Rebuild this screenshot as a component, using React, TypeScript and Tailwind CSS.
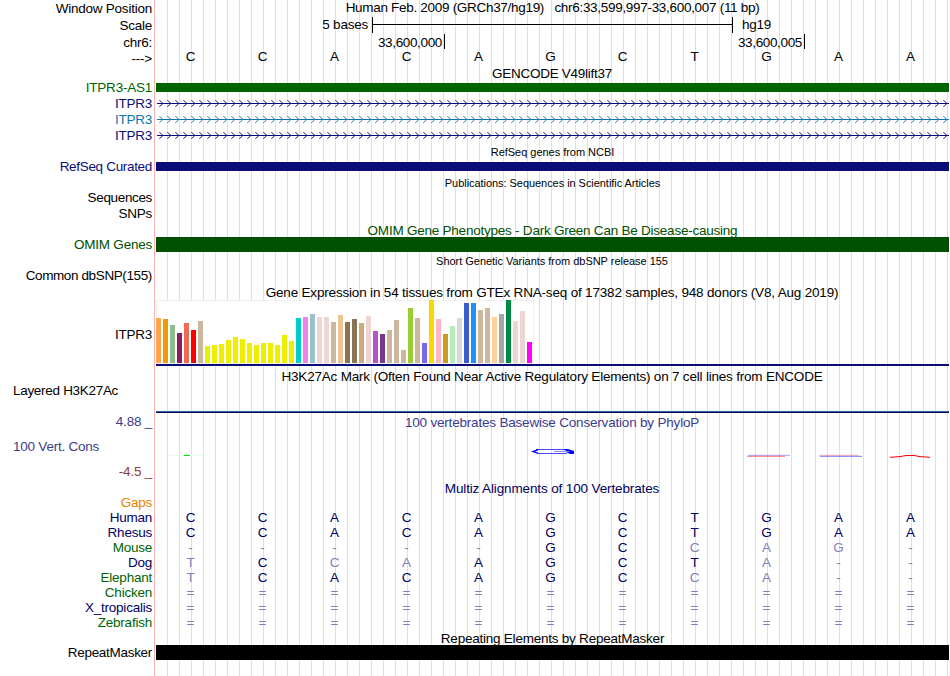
import type { ReactNode } from "react";
import clsx from "clsx";

type RowProps = {
  h: string;
  label?: ReactNode;
  labelCls?: string;
  children?: ReactNode;
};

const NAVY = "text-[#0c0c78]";
const DEEP = "text-[#000064]";
const GREEN = "text-[#006400]";

const sequence = "CCACAGCTGAA";

// lower case = base differs from the reference genome
const species = [
  { name: "Human", cls: DEEP, bases: "CCACAGCTGAA" },
  { name: "Rhesus", cls: DEEP, bases: "CCACAGCTGAA" },
  { name: "Mouse", cls: GREEN, bases: "-----GCcag-" },
  { name: "Dog", cls: DEEP, bases: "tCcaAGCTa--" },
  { name: "Elephant", cls: GREEN, bases: "tCACAGCca--" },
  { name: "Chicken", cls: GREEN, bases: "===========" },
  { name: "X_tropicalis", cls: DEEP, bases: "===========" },
  { name: "Zebrafish", cls: GREEN, bases: "===========" },
];

const tissues: [number, string][] = [
  [45, "#ffa54f"], [44, "#ee9a00"], [38, "#8fbc8f"], [30, "#8b1c62"], [40, "#ee6a50"], [33, "#ff0000"],
  [42, "#cdb79e"], [17, "#eeee00"], [18, "#eeee00"], [19, "#eeee00"], [23, "#eeee00"], [26, "#eeee00"],
  [24, "#eeee00"], [20, "#eeee00"], [18, "#eeee00"], [20, "#eeee00"], [20, "#eeee00"], [18, "#eeee00"],
  [28, "#eeee00"], [22, "#eeee00"], [45, "#00cdcd"], [46, "#ee82ee"], [49, "#9ac0cd"], [46, "#eed5d2"],
  [46, "#eed5d2"], [41, "#cdb79e"], [48, "#eec591"], [41, "#8b7355"], [44, "#8b7355"], [40, "#cdaa7d"],
  [47, "#eed5d2"], [32, "#b452cd"], [29, "#7a378b"], [33, "#cdb79e"], [43, "#cdb79e"], [13, "#cdb79e"],
  [55, "#9acd32"], [45, "#cdb79e"], [20, "#7a67ee"], [63, "#ffd700"], [44, "#ffb6c1"], [29, "#cd9b1d"],
  [37, "#b4eeb4"], [45, "#d9d9d9"], [60, "#3a5fcd"], [60, "#1e90ff"], [53, "#cdb79e"], [55, "#cdb79e"],
  [46, "#ffd39b"], [49, "#a6a6a6"], [63, "#008b45"], [42, "#eed5d2"], [52, "#eed5d2"], [21, "#ff00ff"],
];

function Row({ h, label, labelCls, children }: RowProps) {
  return (
    <div className={clsx("flex shrink-0", h)}>
      <div className={clsx("w-[152px] shrink-0 text-right", labelCls)}>{label}</div>
      <div className="ml-1 w-[793px] shrink-0">{children}</div>
    </div>
  );
}

function Title({ h, cls, children }: { h: string; cls?: string; children: ReactNode }) {
  return (
    <Row h={h}>
      <div className={clsx("text-center", cls)}>{children}</div>
    </Row>
  );
}

function Bases({ bases, cls }: { bases: string; cls: string }) {
  return (
    <div className="-ml-[1.5px] grid w-[793px] grid-cols-[repeat(11,72px)] tracking-normal">
      {bases.split("").map((b, i) => (
        <span key={i} className={clsx("text-center", /[A-Z]/.test(b) ? cls : "text-[#8080b4]")}>
          {b.toUpperCase()}
        </span>
      ))}
    </div>
  );
}

function Intron({ cls }: { cls: string }) {
  return (
    <svg className={clsx("block h-4 w-[793px]", cls)} viewBox="0 0 793 16" fill="none" stroke="currentColor">
      <path d="M1 7.5H793" />
      {Array.from({ length: 99 }, (_, i) => (
        <path key={i} d={`M${i * 8 + 3.5} 4.2l3.3 3.3l-3.3 3.3`} />
      ))}
    </svg>
  );
}

function Conservation() {
  return (
    <svg className="block h-[25px] w-[793px]" viewBox="0 0 793 25" fill="none">
      <path d="M12 16.5H49" stroke="#e4fbe4" />
      <path d="M28 16.5H34" stroke="#00e600" />
      <path d="M380 10.5H409" stroke="#4646ff" />
      <path d="M382 14.5H411" stroke="#4646ff" />
      <path d="M398 12.5H412" stroke="#8c8cff" />
      <path d="M375 12.5l7-2.5v1.5l-3 1l3 1v1.5zM408 10h4l6 2v3h-4l-4-2h4l-6-2z" fill="#0000ff" />
      <path d="M592 16.3H634" stroke="#6464ff" strokeWidth={0.6} />
      <path d="M591 17.3H629" stroke="#ff5050" strokeWidth={0.8} />
      <path d="M663 16.3H702" stroke="#ff7878" strokeWidth={0.6} />
      <path d="M664 17.3H706" stroke="#5050ff" strokeWidth={0.8} />
      <path d="M734 18.3L744 17.6L750 16.5H758L764 17.6L774 18.3" stroke="#ff0000" />
    </svg>
  );
}

export default function App() {
  return (
    <div className="flex h-[676px] w-[950px] overflow-hidden bg-white font-['Liberation_Sans',Arial,sans-serif] text-[13.5px] leading-[15px] tracking-[-0.23px] whitespace-pre text-black">
      <div className="flex w-[949px] flex-col bg-[linear-gradient(#ffb4b4,#ffb4b4),repeating-linear-gradient(90deg,transparent_0_11px,#dcdcff_11px_12px)] bg-[position:154px_0,156px_0] bg-[size:1px_100%,793px_100%] bg-no-repeat">
        <Row h="h-[17px]" label="Window Position" labelCls="pt-px">
          <div className="text-center tracking-[-0.3px]">{"Human Feb. 2009 (GRCh37/hg19)   chr6:33,599,997-33,600,007 (11 bp)"}</div>
        </Row>
        <Row h="h-[18px]" label="Scale" labelCls="pt-px">
          <div className="flex">
            <span className="w-[212px] text-right">5 bases</span>
            <div className="ml-1 flex h-4 w-[361px] items-start border-x border-black pt-[7px]">
              <div className="h-px w-full bg-black" />
            </div>
            <span className="ml-[9px]">hg19</span>
          </div>
        </Row>
        <Row h="h-[15px]" label="chr6:">
          <div className="-mt-px flex tracking-[-0.35px]">
            <div className="h-[15px] w-[289px] border-r border-black pt-px pr-0.5 text-right">33,600,000</div>
            <div className="h-[15px] w-[360px] border-r border-black pt-px pr-0.5 text-right">33,600,005</div>
          </div>
        </Row>
        <Row h="h-4" label="--->" labelCls="pt-px">
          <div className="-mt-px">
            <Bases bases={sequence} cls="text-black" />
          </div>
        </Row>

        <Title h="h-[14px]" cls="pr-px tracking-[-0.27px]">GENCODE V49lift37</Title>
        <Row h="h-4" label="ITPR3-AS1" labelCls={GREEN}>
          <div className="mt-[3px] h-[9px] bg-[#006400]" />
        </Row>
        <Row h="h-4" label="ITPR3" labelCls={NAVY}>
          <Intron cls={NAVY} />
        </Row>
        <Row h="h-4" label="ITPR3" labelCls="text-[#0c78b4]">
          <Intron cls="text-[#0c78b4]" />
        </Row>
        <Row h="h-4" label="ITPR3" labelCls={NAVY}>
          <Intron cls={NAVY} />
        </Row>

        <Title h="h-[15px]" cls="pt-px text-[11px] tracking-[-0.03px]">RefSeq genes from NCBI</Title>
        <Row h="h-4" label="RefSeq Curated" labelCls={clsx(NAVY, "tracking-[-0.32px]")}>
          <div className="mt-[3px] h-[9px] bg-[#0c0c78]" />
        </Row>

        <Title h="h-[15px]" cls="pt-px text-[11px] tracking-[-0.05px]">Publications: Sequences in Scientific Articles</Title>
        <Row h="h-4" label="Sequences" labelCls="tracking-[-0.35px]" />
        <Row h="h-4" label="SNPs" />

        <Title h="h-[15px]" cls="pt-px text-[#005000]">OMIM Gene Phenotypes - Dark Green Can Be Disease-causing</Title>
        <Row h="h-4" label="OMIM Genes" labelCls="text-[#005000]">
          <div className="h-[15px] bg-[#005000]" />
        </Row>

        <Title h="h-[15px]" cls="pt-px pr-px text-[11px] tracking-[-0.03px]">Short Genetic Variants from dbSNP release 155</Title>
        <Row h="h-4" label="Common dbSNP(155)" labelCls="tracking-[-0.38px]" />

        <Title h="h-4" cls="pt-px pr-px tracking-[-0.18px]">Gene Expression in 54 tissues from GTEx RNA-seq of 17382 samples, 948 donors (V8, Aug 2019)</Title>
        <Row h="h-[66px]" label="ITPR3" labelCls="pt-[27px]">
          <div className="flex h-16 w-[378px] items-end gap-0.5 bg-white pb-px shadow-[inset_0_0_0_1px_#f0f0f0]">
            {tissues.map(([value, color], i) => (
              <div key={i} className="w-[5px] shrink-0" style={{ height: value, backgroundColor: color }} />
            ))}
          </div>
          <div className="h-0.5 bg-[#0c0c78]" />
        </Row>

        <Title h="h-[17px]" cls="pt-[3px] pr-px tracking-[-0.2px]">H3K27Ac Mark (Often Found Near Active Regulatory Elements) on 7 cell lines from ENCODE</Title>
        <Row h="h-[30px]" label={<div className="pl-[13px] text-left tracking-[-0.3px]">Layered H3K27Ac</div>}>
          <div className="mt-7 h-0.5 border-t border-[#2864aa] bg-[#0c0c50]" />
        </Row>

        <Row h="h-[26px]" label="4.88 _" labelCls="pt-px text-[#3c3c8c]">
          <div className="pt-0.5 pr-px text-center tracking-[-0.19px] text-[#3c3c8c]">100 vertebrates Basewise Conservation by PhyloP</div>
        </Row>
        <Row h="h-[25px]" label={<div className="pl-[13px] text-left">100 Vert. Cons</div>} labelCls="text-[#3c3c8c]">
          <Conservation />
        </Row>
        <Row h="h-[17px]" label="-4.5 _" labelCls="text-[#8c3c3c]" />

        <Title h="h-[14px]" cls={clsx(DEEP, "pr-px tracking-[-0.13px]")}>Multiz Alignments of 100 Vertebrates</Title>
        <Row h="h-[15px]" label="Gaps" labelCls="text-[#e68200]" />
        {species.map((s) => (
          <Row key={s.name} h="h-[15px]" label={s.name} labelCls={s.cls}>
            <Bases bases={s.bases} cls={DEEP} />
          </Row>
        ))}

        <Title h="h-[15px]" cls="pt-px">Repeating Elements by RepeatMasker</Title>
        <Row h="h-[15px]" label="RepeatMasker" labelCls="tracking-[-0.3px]">
          <div className="h-[15px] bg-black" />
        </Row>
      </div>
    </div>
  );
}
